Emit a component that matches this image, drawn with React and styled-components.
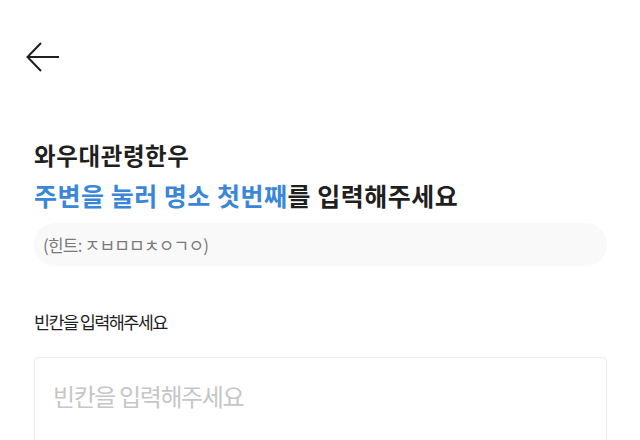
import React from "react";
import styled, { createGlobalStyle } from "styled-components";

const Global = createGlobalStyle`
  html, body { margin: 0; padding: 0; background: #ffffff; }
  body { font-family: "Noto Sans CJK KR", "Noto Sans", sans-serif; color: #1f1f1f; }
  * { box-sizing: border-box; }
`;

const Page = styled.div`
  width: 640px;
  height: 440px;
  overflow: hidden;
  background: #fff;
`;

const Header = styled.header`
  height: 135px;
  display: flex;
  align-items: flex-start;
  padding: 42px 0 0 26px;
`;

const BackButton = styled.button`
  border: 0;
  background: none;
  padding: 0;
  width: 34px;
  height: 30px;
  display: flex;
  align-items: center;
  justify-content: center;
  cursor: pointer;
`;

const Content = styled.main`
  padding: 0 33px 0 34px;
`;

const Title = styled.h1`
  margin: 0;
  font-size: ${p => p.$size || "22px"};
  line-height: 40px;
  font-weight: 700;
  color: #1f1f1f;
  letter-spacing: ${p => p.$spacing || "0"};
  white-space: nowrap;
`;

const Accent = styled.span`
  color: #3a86d8;
`;

const Hint = styled.div`
  margin-top: 8px;
  height: 43px;
  border-radius: 21px;
  background: #f9f9f9;
  display: flex;
  align-items: center;
  padding-left: 9px;
  font-size: 17px;
  color: #7a7a7a;
  letter-spacing: -0.8px;
`;

const Label = styled.div`
  margin-top: 44px;
  font-size: 17.5px;
  line-height: 24px;
  color: #1f1f1f;
  letter-spacing: -1.6px;
`;

const InputBox = styled.div`
  margin-top: 23px;
  height: 100px;
  border: 1px solid #ececec;
  border-radius: 4px;
  padding: 20px 18px;
`;

const Input = styled.input`
  border: 0;
  outline: none;
  width: 100%;
  font-family: inherit;
  font-size: 24px;
  color: #1f1f1f;
  background: transparent;
  padding: 0;
  letter-spacing: -1.4px;
  &::placeholder { color: #c6c6c6; }
`;

export default function App() {
  return (
    <Page>
      <Global />
      <Header>
        <BackButton aria-label="뒤로">
          <svg width="34" height="30" viewBox="0 0 34 30" fill="none">
            <path d="M33 15H2M15 1L1.5 15L15 29" stroke="#1f1f1f" strokeWidth="2" />
          </svg>
        </BackButton>
      </Header>
      <Content>
        <Title $size="23.5px" $spacing="0.6px">와우대관령한우</Title>
        <Title $size="25px" $spacing="0.5px">
          <Accent>주변을 눌러 명소 첫번째</Accent>를 입력해주세요
        </Title>
        <Hint>(힌트: ㅈㅂㅁㅁㅊㅇㄱㅇ)</Hint>
        <Label>빈칸을 입력해주세요</Label>
        <InputBox>
          <Input placeholder="빈칸을 입력해주세요" />
        </InputBox>
      </Content>
    </Page>
  );
}
